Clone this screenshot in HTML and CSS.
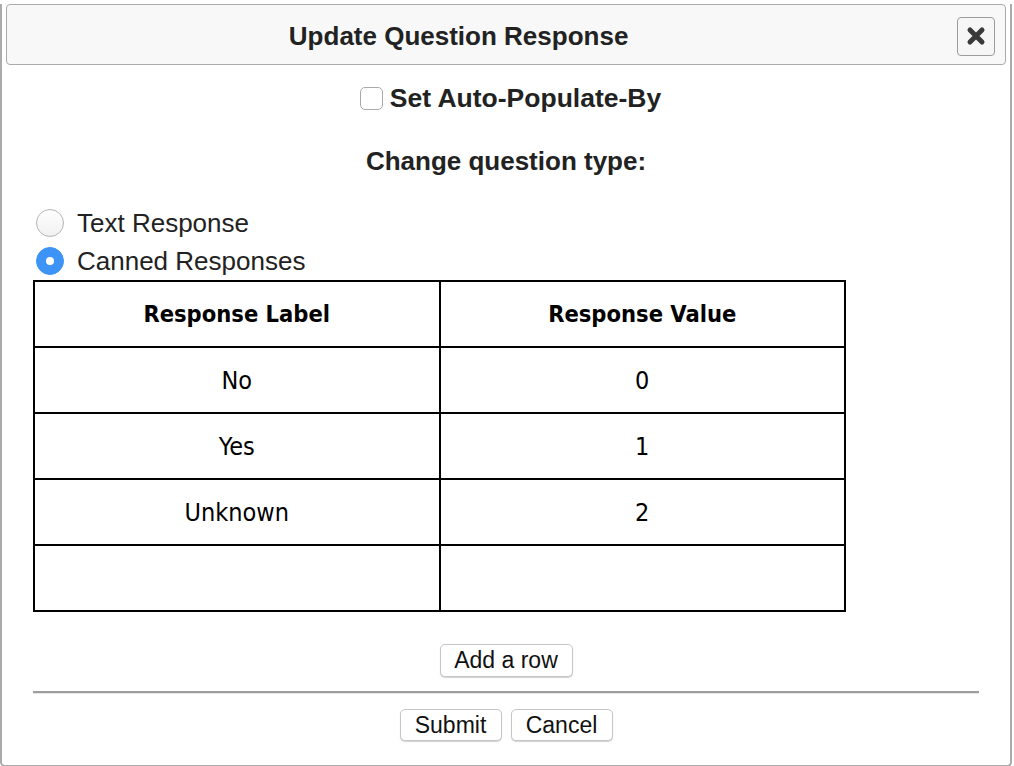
FILE: index.html
```html
<!DOCTYPE html>
<html lang="en">
<head>
    <meta charset="UTF-8">
    <title>Update Question Response</title>
    <link rel="stylesheet" href="styles.css">
</head>
<body>

    <div class="dialog">
        <div class="title-bar">
            <span class="title">Update Question Response</span>
            <button class="close-btn" title="Close">
                <svg width="20" height="20" viewBox="0 0 20 20">
                    <path d="M4 4 L16 16 M16 4 L4 16" stroke="#3a3a3a" stroke-width="5" stroke-linecap="round"/>
                </svg>
            </button>
        </div>

        <div class="content">
            <label class="auto-row">
                <input type="checkbox" class="check">
                <span>Set Auto-Populate-By</span>
            </label>

            <div class="question-type">Change question type:</div>

            <div class="radios">
                <label class="radio-row">
                    <input type="radio" name="qtype" class="radio">
                    <span>Text Response</span>
                </label>
                <label class="radio-row">
                    <input type="radio" name="qtype" class="radio" checked>
                    <span>Canned Responses</span>
                </label>
            </div>

            <table class="responses">
                <tr>
                    <th>Response Label</th>
                    <th>Response Value</th>
                </tr>
                <tr><td>No</td><td>0</td></tr>
                <tr><td>Yes</td><td>1</td></tr>
                <tr><td>Unknown</td><td>2</td></tr>
                <tr><td></td><td></td></tr>
            </table>

            <div class="add-row">
                <button class="btn">Add a row</button>
            </div>

            <div class="divider"></div>

            <div class="actions">
                <button class="btn">Submit</button>
                <button class="btn">Cancel</button>
            </div>
        </div>
    </div>

    <div class="backdrop">
        <span class="mark"></span>
        <span class="mark"></span>
        <span class="mark"></span>
        <span class="mark"></span>
    </div>

</body>
</html>
```

FILE: styles.css
```css
body {
    margin: 0;
    padding: 0;
    background: #ffffff;
    font-family: "Liberation Sans", Arial, sans-serif;
    color: #222;
}

.dialog {
    box-sizing: border-box;
    width: 1012px;
    height: 763px;
    border: 2px solid #ababab;
    border-top: none;
    border-radius: 0 0 5px 5px;
    background: #fff;
}

.title-bar {
    box-sizing: border-box;
    height: 61px;
    margin: 4px 4px 0 4px;
    border: 1.5px solid #aaa;
    border-radius: 4px;
    background: #f8f8f8;
    display: flex;
    align-items: center;
    justify-content: space-between;
    padding-right: 10px;
}

.title {
    flex: 0 0 90%;
    text-align: center;
    font-weight: bold;
    font-size: 26px;
    color: #222;
    padding-top: 4px;
    padding-left: 7px;
}

.close-btn {
    box-sizing: border-box;
    width: 38px;
    height: 39px;
    border: 1.5px solid #9c9c9c;
    border-radius: 4px;
    background: #f6f6f6;
    padding: 0;
    display: flex;
    align-items: center;
    justify-content: center;
    margin-top: 3px;
}

.content {
    padding: 0 31px;
}

/* Checkbox row */
.auto-row {
    display: flex;
    justify-content: center;
    align-items: center;
    height: 28px;
    margin-top: 19px;
    padding-left: 9px;
    font-size: 26.5px;
    font-weight: bold;
    gap: 7px;
}

.check {
    appearance: none;
    -webkit-appearance: none;
    width: 23px;
    height: 23px;
    margin: 0;
    border: 1px solid #a9a9a9;
    border-radius: 5px;
    background: #fff;
}

.question-type {
    text-align: center;
    font-size: 26px;
    font-weight: bold;
    height: 30px;
    line-height: 30px;
    margin-top: 34px;
}

/* Radio list */
.radios {
    margin-top: 28px;
}

.radio-row {
    display: flex;
    align-items: center;
    height: 38px;
    font-size: 26px;
    color: #222;
}

.radio {
    appearance: none;
    -webkit-appearance: none;
    box-sizing: border-box;
    width: 28px;
    height: 28px;
    margin: 0 13px 0 3px;
    border: 1px solid #b5b5b5;
    border-radius: 50%;
    background: linear-gradient(#fff, #f1f1f1);
    position: relative;
}

.radio:checked {
    border-color: #3d94f6;
    background: #3d94f6;
}

.radio:checked::after {
    content: "";
    position: absolute;
    left: 9px;
    top: 9px;
    width: 8px;
    height: 8px;
    border-radius: 50%;
    background: #fff;
}

/* Response table */
.responses {
    width: 813px;
    border-collapse: collapse;
    font-family: "DejaVu Sans Condensed", "DejaVu Sans", sans-serif;
    font-size: 25px;
    color: #000;
}

.responses th,
.responses td {
    border: 2px solid #000;
    height: 64px;
    padding: 0;
    text-align: center;
    width: 50%;
}

.responses th {
    font-weight: bold;
    font-size: 23.5px;
}

/* Buttons */
.btn {
    font-family: "Liberation Sans", Arial, sans-serif;
    font-size: 23px;
    color: #111;
    background: #fff;
    border: 1px solid #c6c6c6;
    border-radius: 5px;
    box-shadow: 0 1px 1px rgba(0, 0, 0, 0.18);
    padding: 0;
    height: 33px;
    white-space: nowrap;
}

.add-row {
    display: flex;
    justify-content: center;
    margin-top: 32px;
}

.add-row .btn {
    width: 133px;
}

.divider {
    margin-top: 14px;
    border-top: 2px solid #9d9d9d;
    border-bottom: 1px solid #e6e6e6;
}

.actions {
    display: flex;
    justify-content: center;
    gap: 9px;
    margin-top: 15px;
}

.actions .btn {
    height: 32px;
    width: 102px;
}

/* Strip of the page visible under the dialog */
.backdrop {
    height: 3px;
    background: #e4e4e4;
    display: flex;
    gap: 250px;
    padding-left: 125px;
}

.mark {
    width: 14px;
    height: 3px;
    background: #4a90e2;
}
```
